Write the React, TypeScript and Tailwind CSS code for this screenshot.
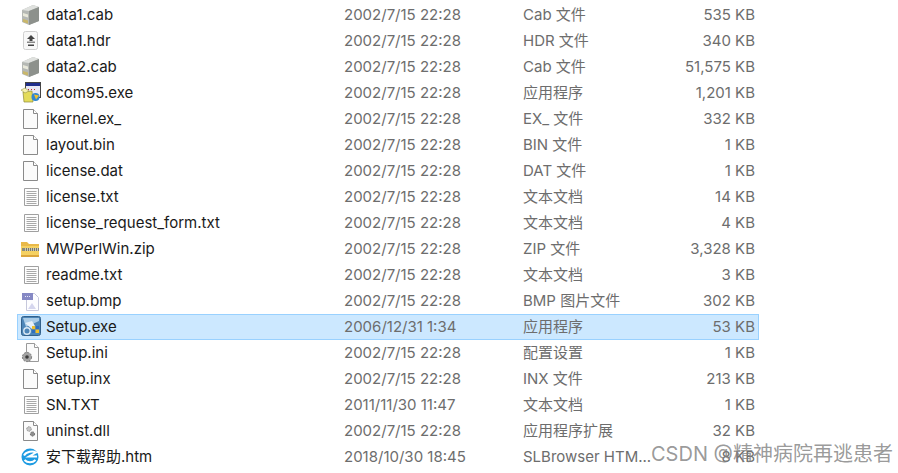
import React from 'react';

type IconKind = 'cab' | 'hdr' | 'exeApp' | 'blank' | 'txt' | 'zip' | 'bmp' | 'setup' | 'ini' | 'dll' | 'htm';

interface FileRow {
  icon: IconKind;
  name: string;
  date: string;
  type: string;
  size: string;
  selected?: boolean;
}

const rows: FileRow[] = [
  { icon: 'cab', name: 'data1.cab', date: '2002/7/15 22:28', type: 'Cab 文件', size: '535 KB' },
  { icon: 'hdr', name: 'data1.hdr', date: '2002/7/15 22:28', type: 'HDR 文件', size: '340 KB' },
  { icon: 'cab', name: 'data2.cab', date: '2002/7/15 22:28', type: 'Cab 文件', size: '51,575 KB' },
  { icon: 'exeApp', name: 'dcom95.exe', date: '2002/7/15 22:28', type: '应用程序', size: '1,201 KB' },
  { icon: 'blank', name: 'ikernel.ex_', date: '2002/7/15 22:28', type: 'EX_ 文件', size: '332 KB' },
  { icon: 'blank', name: 'layout.bin', date: '2002/7/15 22:28', type: 'BIN 文件', size: '1 KB' },
  { icon: 'blank', name: 'license.dat', date: '2002/7/15 22:28', type: 'DAT 文件', size: '1 KB' },
  { icon: 'txt', name: 'license.txt', date: '2002/7/15 22:28', type: '文本文档', size: '14 KB' },
  { icon: 'txt', name: 'license_request_form.txt', date: '2002/7/15 22:28', type: '文本文档', size: '4 KB' },
  { icon: 'zip', name: 'MWPerlWin.zip', date: '2002/7/15 22:28', type: 'ZIP 文件', size: '3,328 KB' },
  { icon: 'txt', name: 'readme.txt', date: '2002/7/15 22:28', type: '文本文档', size: '3 KB' },
  { icon: 'bmp', name: 'setup.bmp', date: '2002/7/15 22:28', type: 'BMP 图片文件', size: '302 KB' },
  { icon: 'setup', name: 'Setup.exe', date: '2006/12/31 1:34', type: '应用程序', size: '53 KB', selected: true },
  { icon: 'ini', name: 'Setup.ini', date: '2002/7/15 22:28', type: '配置设置', size: '1 KB' },
  { icon: 'blank', name: 'setup.inx', date: '2002/7/15 22:28', type: 'INX 文件', size: '213 KB' },
  { icon: 'txt', name: 'SN.TXT', date: '2011/11/30 11:47', type: '文本文档', size: '1 KB' },
  { icon: 'dll', name: 'uninst.dll', date: '2002/7/15 22:28', type: '应用程序扩展', size: '32 KB' },
  { icon: 'htm', name: '安下载帮助.htm', date: '2018/10/30 18:45', type: 'SLBrowser HTM...', size: '8 KB' },
];

const Sheet = () => (
  <>
    <path d="M2.5 1.5h10l4 4v15h-14z" fill="#fbfbfb" stroke="#8a8a8a" />
    <path d="M12.5 1.5v4h4" fill="#fff" stroke="#8a8a8a" />
  </>
);

function FileIcon({ kind }: { kind: IconKind }) {
  return (
    <svg width="20" height="22" viewBox="0 0 20 22" className="shrink-0">
      {kind === 'blank' && <Sheet />}
      {kind === 'txt' && (
        <>
          <path d="M3.5 2.5h14v17h-14z" fill="#fdfdfd" stroke="#a0a0a0" />
          {[5, 7, 9, 11, 13, 15, 17].map((y) => (
            <path key={y} d={`M5.5 ${y}.5h10`} stroke="#a8a8a8" />
          ))}
        </>
      )}
      {kind === 'cab' && (
        <>
          <path d="M1 6l11-5 6 2v14l-10 4-7-3z" fill="#b5b8b4" />
          <path d="M1 6l11-5 6 2-10 4z" fill="#dfe1de" />
          <path d="M8 7l10-4v14L8 21z" fill="#8d918c" />
          <path d="M2 9l5 1.5v3L2 12z" fill="#e8e8da" />
          <path d="M2 15l5 1.5v3L2 18z" fill="#c9b76a" />
        </>
      )}
      {kind === 'hdr' && (
        <>
          <rect x="2.5" y="1.5" width="14" height="18" rx="2" fill="#f8f8f8" stroke="#cfcfcf" />
          <path d="M10 5L6 9h2.5v2h3V9H14z" fill="#444" />
          <path d="M6 11.5h8V13H6z" fill="#888" />
          <path d="M7 14.5h6V16H7z" fill="#444" />
        </>
      )}
      {kind === 'exeApp' && (
        <>
          <rect x="4.5" y="0.5" width="15" height="15" fill="#e8e8f4" stroke="#444" />
          <rect x="5" y="1" width="14" height="3" fill="#1f2e8c" />
          <path d="M7 7h1v1H7zM10 7h1v1h-1zM13 7h1v1h-1z" fill="#b33" />
          <path d="M2 10l9-1 1 11H3z" fill="#e4dc5a" stroke="#8c8a3c" strokeWidth=".7" />
          <path d="M0 8l4-2 4 3-4 2z" fill="#f6f1b0" stroke="#8c8a3c" strokeWidth=".5" />
          <circle cx="14.5" cy="15" r="4" fill="#2f86d0" />
          <path d="M13 12.5l5 1-3 4z" fill="#f0c02c" />
        </>
      )}
      {kind === 'zip' && (
        <>
          <path d="M0 6V4h6l2 2h10v3H0z" fill="#e9b949" />
          <rect x="0" y="8" width="18" height="11" fill="#f5d162" />
          <rect x="0" y="17" width="18" height="2" fill="#dca63c" />
          <rect x="4" y="10" width="14" height="3" fill="#c6c6b6" />
          <path d="M5.5 10v3M7.5 10v3M9.5 10v3M11.5 10v3M13.5 10v3M15.5 10v3M17.5 10v3" stroke="#77776a" />
          <rect x="1" y="10" width="3" height="3" fill="#8a8a7a" />
        </>
      )}
      {kind === 'bmp' && (
        <>
          <path d="M5.5 3.5h8l4 4v13h-12z" fill="#fdfdff" stroke="#c6c8dc" />
          <rect x="1" y="3" width="11" height="7" fill="#8588c4" />
          <path d="M4 6h1v1H4zM6 6h1v1H6zM8 6h1v1H8z" fill="#e6e6f6" />
          <path d="M7 19l4-6 4 6z" fill="#d5d6ee" />
        </>
      )}
      {kind === 'setup' && (
        <>
          <rect x="0.5" y="0.5" width="19" height="19" rx="2" fill="#4d86b8" stroke="#33628c" />
          <path d="M2 2h16v3L5 11z" fill="#a9cbe6" />
          <path d="M4 7l7-2 3 5-3 3z" fill="#e6f0f8" />
          <circle cx="6" cy="15" r="3.2" fill="none" stroke="#dbe9f4" strokeWidth="1.4" />
          <path d="M11 10h3.5v3.5H11z" fill="#f0c02c" />
          <path d="M14.5 10H18v3.5h-3.5z" fill="#2f6fc0" />
          <path d="M11 13.5h3.5V17H11z" fill="#2f6fc0" />
          <path d="M14.5 13.5H18V17h-3.5z" fill="#f0c02c" />
        </>
      )}
      {kind === 'ini' && (
        <>
          <path d="M5.5 1.5h8l4 4v14h-12z" fill="#fbfbfb" stroke="#9a9a9a" />
          <path d="M13.5 1.5v4h4" fill="#fff" stroke="#9a9a9a" />
          <circle cx="6" cy="15" r="4.6" fill="#a4a4a4" stroke="#808080" strokeDasharray="2 1" />
          <circle cx="6" cy="15" r="1.8" fill="#3c3c3c" />
        </>
      )}
      {kind === 'dll' && (
        <>
          <Sheet />
          <circle cx="8" cy="9" r="2.3" fill="#c6c6c6" stroke="#909090" strokeDasharray="1.5 .7" />
          <circle cx="11.5" cy="14" r="2.1" fill="#8e8e8e" stroke="#666" strokeDasharray="1.5 .7" />
        </>
      )}
      {kind === 'htm' && (
        <>
          <circle cx="9" cy="11" r="8.5" fill="#1d9be2" />
          <path d="M3 9.5c2-4 9-5 12-3L8 10.5h8" fill="none" stroke="#fff" strokeWidth="2" />
          <path d="M3.5 14c3 3 8 3 11 0" fill="none" stroke="#fff" strokeWidth="2" />
        </>
      )}
    </svg>
  );
}

export default function App() {
  return (
    <div className="relative h-[473px] w-[898px] overflow-hidden bg-white pl-[17px] pt-[2px] font-['Inter','Noto_Sans_CJK_SC',sans-serif] text-[15px]">
      <div className="flex w-[742px] flex-col">
        {rows.map((row) => (
          <div
            key={row.name}
            className={`flex h-[26px] items-center border pl-[3px] pr-[3px] ${
              row.selected ? 'border-[#99d1ff] bg-[#cce8ff]' : 'border-transparent'
            }`}
          >
            <div className="flex w-[25px] shrink-0">
              <FileIcon kind={row.icon} />
            </div>
            <div className="w-[298px] shrink-0 whitespace-nowrap pt-[1px] text-[#1a1a1a]">{row.name}</div>
            <div className="w-[179px] shrink-0 whitespace-nowrap pt-[1px] text-[#6d6d6d]">{row.date}</div>
            <div className="w-[120px] shrink-0 whitespace-nowrap pt-[1px] text-[#6d6d6d]">{row.type}</div>
            <div className="flex-1 whitespace-nowrap pt-[1px] text-right text-[#6d6d6d]">{row.size}</div>
          </div>
        ))}
      </div>
      <div className="absolute left-[651px] top-[441px] whitespace-nowrap text-[20px] leading-[26px] text-[#7f7f7f]/80">
        CSDN @精神病院再逃患者
      </div>
    </div>
  );
}
